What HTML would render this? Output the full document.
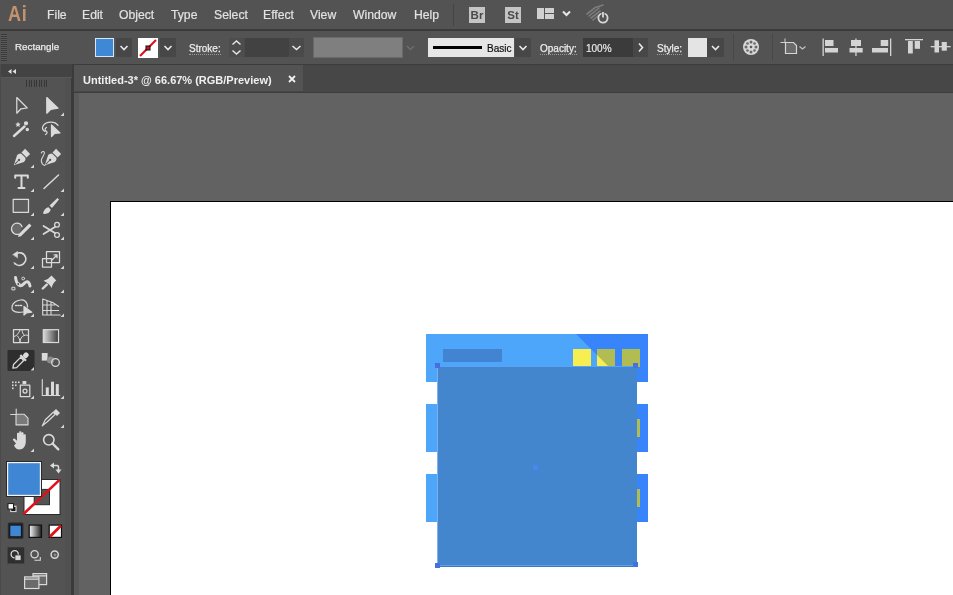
<!DOCTYPE html>
<html><head><meta charset="utf-8">
<style>
*{margin:0;padding:0;box-sizing:border-box}
html,body{width:953px;height:595px;overflow:hidden;background:#626262;font-family:"Liberation Sans",sans-serif}
.a{position:absolute}
svg{display:block}
#menubar{left:0;top:0;width:953px;height:31px;background:#535353;border-bottom:2px solid #3b3b3b}
#menubar .m{position:absolute;top:8px;font-size:12.2px;color:#e2e2e2;white-space:nowrap;-webkit-text-stroke:0.2px #e2e2e2}
#opts{left:0;top:31px;width:953px;height:33px;background:#535353}
.t10{font-size:10px;color:#ececec;white-space:nowrap;-webkit-text-stroke:0.25px #ececec}
.ul{border-bottom:1px dotted #9a9a9a;line-height:11px}
.grip{left:1px;top:3px;width:6px;height:27px;background:repeating-linear-gradient(#3a3a3a 0 1px,#5a5a5a 1px 2px)}
.chv{width:16px;height:19px;background:#474747}
#tabbar{left:74px;top:64px;width:879px;height:30px;background:#474747;border-top:1px solid #3c3c3c;border-bottom:2px solid #3d3d3d}
#tab{left:74px;top:65px;width:229px;height:26px;background:#535353}
#tools{left:0;top:64px;width:71px;height:531px;background:#535353;border-right:6px solid #505050;border-left:1px solid #4b4b4b}
#vline{left:71px;top:64px;width:3px;height:531px;background:#3b3b3b}
#canvas{left:74px;top:93px;width:879px;height:502px;background:#626262;border-left:5px solid #595959}
#artboard{left:110px;top:201px;width:843px;height:394px;background:#fff;border-left:1px solid #000;border-top:1px solid #000}

.bar{left:426px;width:222px;height:48px;background:#4ea6fb;overflow:hidden}
.sh{position:absolute;left:150px;top:0;width:200px;height:48px;background:#b7cbff;mix-blend-mode:multiply;transform-origin:0 0;transform:skewX(45deg)}
.sh2{position:absolute;left:150px;top:0;width:200px;height:48px;background:rgba(60,40,0,0.0);transform-origin:0 0;transform:skewX(45deg)}
.sq{width:18px;height:18px;background:#f7ee52}
.anc{width:5px;height:5px;background:#4570e0}
</style></head><body>
<div id="menubar" class="a">
 <div class="m" style="left:8px;top:1px;font-size:22px;font-weight:bold;color:#c4926d;transform:scaleX(0.82);letter-spacing:1px;-webkit-text-stroke:0;transform-origin:0 0">Ai</div>
 <div class="m" style="left:47px">File</div>
 <div class="m" style="left:82px">Edit</div>
 <div class="m" style="left:119px">Object</div>
 <div class="m" style="left:171px">Type</div>
 <div class="m" style="left:214px">Select</div>
 <div class="m" style="left:263px">Effect</div>
 <div class="m" style="left:310px">View</div>
 <div class="m" style="left:353px">Window</div>
 <div class="m" style="left:414px">Help</div>
 <div class="a" style="left:453px;top:4px;width:1px;height:22px;background:#444"></div>
 <div class="a" style="left:469px;top:7px;width:16px;height:16px;background:#c4c4c4;color:#4a4a4a;font-size:11.5px;font-weight:bold;text-align:center;line-height:17px">Br</div>
 <div class="a" style="left:505px;top:7px;width:16px;height:16px;background:#c4c4c4;color:#4a4a4a;font-size:11.5px;font-weight:bold;text-align:center;line-height:17px">St</div>
 <div class="a" style="left:537px;top:8px"><svg width="36" height="12"><g fill="#d0d0d0"><rect x="0" y="0" width="7" height="11"/><rect x="8" y="0" width="9" height="5"/><rect x="8" y="6" width="9" height="5"/></g><path d="M26 3.5l3.5 3.5 3.5-3.5" stroke="#e8e8e8" stroke-width="2" fill="none"/></svg></div>
 <div class="a" style="left:585px;top:3px"><svg width="26" height="22"><g stroke="#7c7c7c" stroke-width="1.6" stroke-linecap="round"><path d="M2 11l9-7M4 13l10-8M6 15l9-7M8 17l6-5M12 4l6-2"/></g><circle cx="18" cy="15" r="4.6" fill="#535353" stroke="#d8d8d8" stroke-width="1.8"/><path d="M18 8.5v6.5" stroke="#535353" stroke-width="3"/><path d="M18 9v5.5" stroke="#d8d8d8" stroke-width="1.8"/></svg></div>
</div>
<div id="opts" class="a">
 <div class="a grip"></div>
 <div class="a t10" style="left:15px;top:10px;font-size:9.8px">Rectangle</div>
 <div class="a sw" style="left:95px;top:7px;width:19px;height:19px;border:1px solid #d9e6f5;background:#3f88d6"></div>
 <div class="a chv" style="left:116px;top:7px"><svg width="16" height="19"><path d="M4.5 8l3.5 3.5 3.5-3.5" stroke="#e8e8e8" stroke-width="1.6" fill="none"/></svg></div>
 <div class="a sw" style="left:138px;top:7px;width:20px;height:20px;background:#fff"><svg width="20" height="20" style="position:absolute;left:0;top:0"><path d="M2 18L18 2" stroke="#e0101b" stroke-width="2.2"/><rect x="8" y="8" width="4" height="4" fill="#d01020" stroke="#1a1a1a" stroke-width="1.1"/></svg></div>
 <div class="a chv" style="left:160px;top:7px"><svg width="16" height="19"><path d="M4.5 8l3.5 3.5 3.5-3.5" stroke="#e8e8e8" stroke-width="1.6" fill="none"/></svg></div>
 <div class="a t10 ul" style="left:189px;top:12px">Stroke:</div>
 <div class="a" style="left:229px;top:7px;width:75px;height:19px;background:#4a4a4a"></div>
 <div class="a" style="left:229px;top:7px;width:15px;height:19px;background:#4d4d4d"><svg width="15" height="19"><path d="M3.5 6.5l4-3.5 4 3.5M3.5 12.5l4 3.5 4-3.5" stroke="#e8e8e8" stroke-width="1.4" fill="none"/></svg></div>
 <div class="a" style="left:245px;top:7px;width:44px;height:19px;background:#424242"></div>
 <div class="a" style="left:289px;top:7px;width:15px;height:19px"><svg width="15" height="19"><path d="M3.5 8l4 3.5 4-3.5" stroke="#e8e8e8" stroke-width="1.6" fill="none"/></svg></div>
 <div class="a" style="left:313px;top:6px;width:90px;height:21px;background:#7f7f7f;border:1px solid #6a6a6a"></div>
 <div class="a" style="left:403px;top:7px;width:15px;height:19px"><svg width="15" height="19"><path d="M4 8l3.5 3.5 3.5-3.5" stroke="#6e6e6e" stroke-width="1.4" fill="none"/></svg></div>
 <div class="a" style="left:428px;top:7px;width:86px;height:19px;background:#e6e6e6"><div class="a" style="left:5px;top:8px;width:49px;height:3px;background:#000"></div><div class="a" style="left:59px;top:5px;font-size:10px;color:#111;-webkit-text-stroke:0.2px #111">Basic</div></div>
 <div class="a" style="left:515px;top:7px;width:16px;height:19px;background:#474747"><svg width="16" height="19"><path d="M4.5 8l3.5 3.5 3.5-3.5" stroke="#e8e8e8" stroke-width="1.6" fill="none"/></svg></div>
 <div class="a t10 ul" style="left:540px;top:12px">Opacity:</div>
 <div class="a" style="left:583px;top:7px;width:50px;height:19px;background:#3b3b3b"><div class="a" style="left:3px;top:5px;font-size:10px;color:#e8e8e8;-webkit-text-stroke:0.2px #e8e8e8">100%</div></div>
 <div class="a" style="left:633px;top:7px;width:15px;height:19px;background:#474747"><svg width="15" height="19"><path d="M6 5.5l3.5 4-3.5 4" stroke="#e8e8e8" stroke-width="1.6" fill="none"/></svg></div>
 <div class="a t10 ul" style="left:657px;top:12px">Style:</div>
 <div class="a" style="left:688px;top:7px;width:19px;height:19px;background:#e4e4e4"></div>
 <div class="a" style="left:707px;top:7px;width:17px;height:19px;background:#474747"><svg width="17" height="19"><path d="M5 8l3.5 3.5 3.5-3.5" stroke="#e8e8e8" stroke-width="1.6" fill="none"/></svg></div>
 <div class="a" style="left:733px;top:3px;width:1px;height:27px;background:#484848"></div>
 <div class="a" style="left:772px;top:3px;width:1px;height:27px;background:#484848"></div>
 <div class="a" style="left:742px;top:7px"><svg width="18" height="18"><circle cx="9" cy="9" r="8" fill="#d8d8d8"/><circle cx="9" cy="9" r="1.3" fill="#5a5a5a"/><g fill="#6a6a6a"><circle cx="9" cy="4" r="1.5"/><circle cx="9" cy="14" r="1.5"/><circle cx="4" cy="9" r="1.5"/><circle cx="14" cy="9" r="1.5"/><circle cx="5.5" cy="5.5" r="1.3"/><circle cx="12.5" cy="12.5" r="1.3"/><circle cx="12.5" cy="5.5" r="1.3"/><circle cx="5.5" cy="12.5" r="1.3"/></g></svg></div>
 <div class="a" style="left:779px;top:6px"><svg width="30" height="22"><path d="M1.5 5.5h4.5M6 1.5v4" stroke="#cfcfcf" stroke-width="1"/><path d="M6.5 5.5h8l3 3v8h-11z" fill="#6a6a6a" stroke="#d6d6d6" stroke-width="1.2"/><path d="M20.5 9.5l3 2.5 3-2.5" stroke="#c0c0c0" stroke-width="1.3" fill="none"/></svg></div>
 <div class="a" style="left:820px;top:6px"><svg width="133" height="22">
  <g fill="#d4d4d4">
   <rect x="2.5" y="1.5" width="1.3" height="17.5"/><rect x="5" y="3" width="8.5" height="6"/><rect x="5" y="11" width="13" height="4.5"/>
   <rect x="35.3" y="1.5" width="1.3" height="17.5"/><rect x="31" y="3" width="10" height="6"/><rect x="29.5" y="11" width="13.2" height="4.5"/>
   <rect x="70" y="1.5" width="1.3" height="17.5"/><rect x="60.7" y="3" width="7.5" height="6"/><rect x="52" y="11" width="16" height="4.5"/>
   <rect x="85" y="2" width="18" height="1.3"/><rect x="88" y="4" width="4.8" height="12.5"/><rect x="94.7" y="4" width="5.3" height="7.8"/>
   <rect x="110.7" y="9" width="20" height="1.3"/><rect x="114.5" y="3.3" width="4.5" height="12.2"/><rect x="121.7" y="5" width="5.1" height="8.7"/>
  </g></svg></div>
</div>
<div id="tabbar" class="a"></div>
<div id="tab" class="a"><div class="a" style="left:9px;top:9px;font-size:11px;font-weight:bold;color:#f0f0f0;white-space:nowrap">Untitled-3* @ 66.67% (RGB/Preview)</div>
<svg class="a" style="left:214px;top:10px" width="8" height="8"><path d="M1 1l6 6M7 1l-6 6" stroke="#f0f0f0" stroke-width="1.8"/></svg></div>
<div id="canvas" class="a"></div>
<div id="artboard" class="a"></div>
<div class="a bar" style="top:334px">
 <div class="a" style="left:17px;top:15px;width:59px;height:13px;background:#4283d2"></div>
 <div class="a sq" style="left:147px;top:15px"></div>
 <div class="a sq" style="left:171px;top:15px"></div>
 <div class="a sq" style="left:196px;top:15px"></div>
 <div class="sh"></div>
</div>
<div class="a bar" style="top:404px"><div class="a sq" style="left:196px;top:15px"></div><div class="sh"></div></div>
<div class="a bar" style="top:474px"><div class="a sq" style="left:196px;top:15px"></div><div class="sh"></div></div>
<div class="a" style="left:437px;top:366px;width:200px;height:201px;background:#4386cd"></div>
<div class="a" style="left:437px;top:366px;width:200px;height:1px;background:#58a2f8"></div>
<div class="a" style="left:437px;top:565px;width:200px;height:1px;background:#5ea2ee"></div>
<div class="a" style="left:437px;top:566px;width:200px;height:1px;background:#3f76c2"></div>
<div class="a" style="left:437px;top:366px;width:1px;height:201px;background:#7fb0f2"></div>
<div class="a anc" style="left:435px;top:363px"></div>
<div class="a anc" style="left:633px;top:363px"></div>
<div class="a anc" style="left:435px;top:563px"></div>
<div class="a anc" style="left:633px;top:562px"></div>
<div class="a anc" style="left:533px;top:465px;background:#4b86ee"></div>
<div id="vline" class="a"></div>
<div id="tools" class="a">
 <div class="a" style="left:0;top:0;width:71px;height:14px;background:#434343;border-bottom:1px solid #585858"></div>
 <svg class="a" style="left:5px;top:4px" width="11" height="7"><path d="M5.5 1L2 3.5L5.5 6zM10 1L6.5 3.5L10 6z" fill="#e0e0e0"/></svg>
 <div class="a" style="left:25px;top:16px;width:22px;height:7px;background:repeating-linear-gradient(90deg,#363636 0 1px,transparent 1px 2.5px)"></div>
</div>
<svg class="a" style="left:0;top:90px" width="71" height="505" viewBox="0 90 71 505">
<defs><linearGradient id="gr" x1="0" x2="1"><stop offset="0" stop-color="#dcdcdc"/><stop offset="1" stop-color="#3a3a3a"/></linearGradient>
<linearGradient id="gr2" x1="0" x2="1"><stop offset="0" stop-color="#fafafa"/><stop offset="1" stop-color="#1e1e1e"/></linearGradient></defs>
<!-- selected eyedropper bg -->
<rect x="7.5" y="350" width="27" height="21" rx="1" fill="#2e2e2e"/>
<g fill="none" stroke="#dadada" stroke-width="1.25" stroke-linejoin="round" stroke-linecap="round">
 <!-- selection -->
 <path d="M16.8 97.5L27.2 108L21 108.8L16.8 113.2Z"/>
 <!-- direct selection -->
 <path d="M46.8 97.5L58 108.2L50.5 109.5L46.8 113.2Z" fill="#dadada"/>
 <!-- wand -->
 <path d="M14 136l10.5-9.5" stroke-width="2.4"/>
 <circle cx="26" cy="123.3" r="1.5" fill="#dadada"/><circle cx="27.3" cy="129.5" r="1.1" fill="#dadada"/>
 <!-- lasso -->
 <path d="M45 131.5c-2.5-1.5-3-3.5-2-5.5 1.5-2.5 4.5-3.8 8-3.8 3 0 5.5 1.2 7 3.2"/>
 <path d="M46.5 127.5c-1.5 .5-2 2.5-.5 3.5s1.5 2.5-.5 3.5"/>
 <path d="M51.5 125v11.5l3-3 5.5-.5z" fill="#dadada"/>
 <path d="M41.3 153c.8-2.3 3.5-2 3 .5-.5 2.5-3.3 4.5-3 7.5.3 2.5 2 4 3.5 4.5" stroke-width="1.1"/>
 <!-- type T -->
 <path d="M15.2 177.8v-2.3h12.6v2.3M21.5 175.5v12.5M18.5 188h6" stroke-width="2"/>
 <!-- line -->
 <path d="M44 188.5l14.5-13.5" stroke-width="1.5"/>
 <!-- rect -->
 <rect x="13.2" y="199.3" width="15.3" height="13" fill="#5d5d5d"/>
 <!-- scissors -->
 <circle cx="57" cy="224.8" r="2.4"/><circle cx="57" cy="235" r="2.4"/>
 <path d="M43.5 226l11.5 7M43.5 234l11.5-7" stroke-width="1.7"/>
 <!-- rotate -->
 <path d="M16.5 253.5a6.3 6.3 0 1 1 -1.5 10" stroke-width="1.7"/>
 <path d="M15 264.5a6.3 6.3 0 0 1 -1 -2" stroke-width="1" stroke-dasharray="1 1"/>
 <path d="M13 254.5l4.5-3v6z" fill="#dadada" stroke-width="0.6"/>
 <!-- scale -->
 <rect x="46.5" y="251.5" width="13" height="11"/><rect x="42.5" y="258.5" width="9" height="8.5"/>
 <path d="M52 260l5-5M54 254.8h3v3"/>
 <!-- warp -->
 <path d="M15.5 277.5c.5 3.5 1.5 6.5 4 8s4.5-2.5 6.5-3.5 3.5 1 4 4" stroke-width="3"/>
 <circle cx="18.3" cy="284" r="1.5" fill="#535353" stroke-width="1"/><circle cx="23.2" cy="278.5" r="1.4" fill="#535353" stroke-width="1"/>
 <rect x="12.3" y="287.3" width="2.6" height="2.6" stroke-width="1"/>
 <!-- pin -->
 <path d="M42.8 288.5l4-3.8" stroke-width="2.4"/>
 <!-- shape builder -->
 <path d="M23 312c-3 .5-8 .5-10-1.5s-1-6.5 2-8.5 8-3 10-1c2 1.5 2.5 4 2.5 6"/>
 <path d="M15.5 305.5h7" stroke-dasharray="1.2 1.3" stroke-width="1.3"/>
 <path d="M24 306.5v8.5l2.5-2.2 5.3-.6z" fill="#dadada"/>
 <!-- perspective -->
 <path d="M42.7 315v-16l10 3.5 6 4M42.7 315h17.5M42.7 305h12M42.7 310.5h16M47 300.5v14.5M51 302v13" stroke-width="1.1"/>
 <!-- mesh -->
 <rect x="13.5" y="329.7" width="15" height="12.8"/>
 <path d="M14 336.5c3-.5 4.5-3 6-6.5M20 342c0-3 1.5-5.5 4-6.5s3.5 0 4.5 0M17.5 336c1.5 2 2.5 3.5 2.5 6M22 330c0 2 1 4 2.5 5.5" stroke-width="1"/>
</g>
<g fill="#dadada">
 <!-- wand star -->
 <path d="M18 121.8l.8 1.8 1.9.2-1.4 1.2.4 1.9-1.7-1-1.7 1 .4-1.9-1.4-1.2 1.9-.2z"/>
 <!-- pen -->
 <g transform="translate(13.8 165.2) rotate(45)"><path d="M0 0L-4.8 -9.5Q-4.8 -13 -2.5 -13.5L2.5 -13.5Q4.8 -13 4.8 -9.5Z"/><rect x="-3.6" y="-19.5" width="7.2" height="5"/><path d="M0 -1.5V-7" stroke="#535353" stroke-width="1"/><circle cx="0" cy="-7.5" r="1.1" fill="#535353"/></g>
 <g transform="translate(44.8 165.2) rotate(45)"><path d="M0 0L-4.8 -9.5Q-4.8 -13 -2.5 -13.5L2.5 -13.5Q4.8 -13 4.8 -9.5Z"/><rect x="-3.6" y="-19.5" width="7.2" height="5"/><path d="M0 -1.5V-7" stroke="#535353" stroke-width="1"/><circle cx="0" cy="-7.5" r="1.1" fill="#535353"/></g>
 <!-- brush -->
 <path d="M57.5 198l1.5 1.5-7 8.5-2.5-2.5z"/>
 <path d="M43 213.8c.5-3 2.5-6 5.5-6.5l2.2 2.2c-.5 3-3.5 5-7.7 4.3z"/>
 <!-- shaper pencil -->
 <path d="M29.3 223.5l2.2 2.2-10.5 10.5-3 .8.8-3z"/>
 <!-- pin head -->
 <path d="M51.5 275.5L56.3 280.5Q53 282.5 51.5 288Q49.5 283.5 43.5 280.8Q48.5 279.5 51.5 275.5Z"/>
 <!-- blend -->
 <rect x="41.8" y="353" width="5.8" height="7.6"/>
 <circle cx="50.5" cy="360" r="3.6" fill="#8a8a8a"/>
 <!-- symbol sprayer dots -->
 <rect x="12" y="381.5" width="1.6" height="1.6"/><rect x="15" y="381.5" width="1.6" height="1.6"/><rect x="18" y="381.5" width="1.6" height="1.6"/>
 <rect x="12" y="384.5" width="1.6" height="1.6"/><rect x="15" y="384.5" width="1.6" height="1.6"/>
 <rect x="12" y="387.5" width="1.6" height="1.6"/>
 <rect x="22.5" y="381" width="3.8" height="3.2"/>
 <!-- column graph bars -->
 <rect x="45.8" y="387.4" width="3" height="8"/><rect x="51" y="381.7" width="3" height="13.7"/><rect x="55.8" y="384.1" width="3" height="11.3"/>
 <!-- knife handle -->
 <path d="M53 412l3-3 4 4-3 3z"/>
 <!-- hand -->
 <path d="M16 443.5l-3-3.5c-.5-1 .8-2 1.8-1.3l2.2 2v-7c0-1.3 2.2-1.3 2.2 0v5.5-7c0-1.3 2.2-1.3 2.2 0v7-6c0-1.3 2.2-1.3 2.2 0v6.5-4.5c0-1.3 2.2-1.3 2.2 0v6.3c0 4.5-2.5 8-6.5 8-2.5 0-4-1.5-5.3-4z"/>
</g>
<g fill="none" stroke="#dadada" stroke-width="1.25" stroke-linejoin="round" stroke-linecap="round">
 <!-- shaper circle -->
 <path d="M19.5 234c-3 1.3-8 -.3-8-5.3 0-3 2.5-5.5 5.5-5.5 2.5 0 4.3 1.5 5 3.5" fill="#6a6a6a"/>
 <!-- eyedropper -->
 <g transform="translate(13.3 367.8) rotate(45)"><path d="M0 0.5L-2.2 -2.5V-12.5H2.2V-2.5Z" stroke-width="1.3"/><rect x="-4" y="-15" width="8" height="2.2" fill="#dadada" stroke="none"/><rect x="-2.5" y="-20.5" width="5" height="5.5" rx="1.8" fill="#dadada" stroke="none"/></g>
 <!-- blend outlined circle -->
 <circle cx="55.5" cy="362.5" r="3.8"/>
 <!-- symbol can -->
 <rect x="20.3" y="385.2" width="9.5" height="11.4"/><circle cx="25" cy="391" r="2"/>
 <!-- column graph axis -->
 <path d="M42.3 379.5v16h17.5" stroke-width="1.1"/>
 <!-- artboard -->
 <path d="M10.7 414.5h5.5v-5.5" stroke-width="1.1"/>
 <path d="M16 414.2h8l4 4v6.7h-12z" fill="#7a7a7a" stroke-width="1.1"/>
 <!-- knife -->
 <path d="M42.3 425.8l3-6 8-7.5 2 2-8 7.5z" stroke-width="1.2"/>
 <!-- zoom -->
 <circle cx="48.8" cy="439.8" r="5.2" stroke-width="1.6"/><path d="M52.5 443.5l5.8 5.8" stroke-width="2.4"/>
</g>
<rect x="43.3" y="329.7" width="15.2" height="12.8" fill="url(#gr)" stroke="#dadada" stroke-width="1.2"/>
<!-- small corner triangles -->
<g fill="#d6d6d6">
 <path d="M64 112.5v3.5h-3.5z"/>
 <path d="M34 164.5v3.5h-3.5z"/>
 <path d="M34 188.5v3.5h-3.5zM64 188.5v3.5h-3.5z"/>
 <path d="M34 212.5v3.5h-3.5zM64 212.5v3.5h-3.5z"/>
 <path d="M34 236.5v3.5h-3.5zM64 236.5v3.5h-3.5z"/>
 <path d="M34 265.5v3.5h-3.5zM64 265.5v3.5h-3.5z"/>
 <path d="M34 289.5v3.5h-3.5zM64 289.5v3.5h-3.5z"/>
 <path d="M34 313.5v3.5h-3.5zM64 313.5v3.5h-3.5z"/>
 <path d="M34 367v3.5h-3.5z"/>
 <path d="M34 395.5v3.5h-3.5zM64 395.5v3.5h-3.5z"/>
 <path d="M64 424.5v3.5h-3.5z"/>
 <path d="M34 448.5v3.5h-3.5z"/>
</g>
<!-- fill/stroke -->
<rect x="24" y="479.5" width="36" height="35" fill="#fff" stroke="#2a2a2a" stroke-width="1"/>
<rect x="34.2" y="489.4" width="15.3" height="15.3" fill="#535353" stroke="#2a2a2a" stroke-width="1"/>
<path d="M23.5 514L59.8 479.6" stroke="#e0101b" stroke-width="2.6"/>
<rect x="6.5" y="461.5" width="35" height="35" fill="#f4f4f4" stroke="#2a2a2a" stroke-width="1"/>
<rect x="8.2" y="463.2" width="31.6" height="31.6" fill="#3f86d4"/>
<path d="M53 465.5H57Q58.5 465.5 58.5 467V470.5" fill="none" stroke="#dcdcdc" stroke-width="1.5"/><path d="M50 465.5L54 462.5V468.5Z M55.5 469.5H61.5L58.5 473.5Z" fill="#dcdcdc"/>
<rect x="10.7" y="506.3" width="5.3" height="5.3" fill="#1a1a1a" stroke="#e0e0e0" stroke-width="1"/>
<rect x="8" y="503.6" width="5.5" height="5.5" fill="#fff" stroke="#1a1a1a" stroke-width="1"/>
<!-- color/grad/none -->
<rect x="7.8" y="522.5" width="15.6" height="16.2" rx="1.5" fill="#2a2a2a"/>
<rect x="9.8" y="525.1" width="11.6" height="11.7" fill="#3f86d4" stroke="#111" stroke-width="1"/>
<rect x="29.2" y="525.1" width="12.3" height="12.3" fill="url(#gr2)" stroke="#111" stroke-width="1.2"/>
<rect x="49.2" y="525.1" width="12.3" height="12.3" fill="#fff" stroke="#111" stroke-width="1.2"/>
<path d="M49.8 536.8l11.1-11.1" stroke="#e0101b" stroke-width="2.8"/>
<!-- draw modes -->
<rect x="7.6" y="547.3" width="16.6" height="16.2" fill="#2f2f2f"/>
<g fill="none" stroke="#d8d8d8" stroke-width="1.3">
 <circle cx="14.7" cy="554.3" r="3.6"/><rect x="15" y="555" width="6" height="5.3" fill="#d8d8d8" stroke="#2f2f2f" stroke-width="0.7"/>
 <circle cx="34.6" cy="554.3" r="3.6"/><path d="M34.5 560.3h5.8v-3.3" stroke-width="1.1"/>
 <circle cx="54.7" cy="554.6" r="3.6" stroke-width="1.5"/><circle cx="55" cy="555" r="1.4" fill="#8a8a8a" stroke="none"/>
</g>
<!-- screen mode -->
<rect x="33" y="573.6" width="13.6" height="11" fill="#6a6a6a" stroke="#dadada" stroke-width="1.2"/>
<rect x="24.6" y="576.9" width="14.3" height="11.6" fill="#6a6a6a" stroke="#dadada" stroke-width="1.2"/>
<path d="M33 575.8h13.6M24.6 579.1h14.3" stroke="#dadada" stroke-width="1.2"/>
</svg>
</body></html>
